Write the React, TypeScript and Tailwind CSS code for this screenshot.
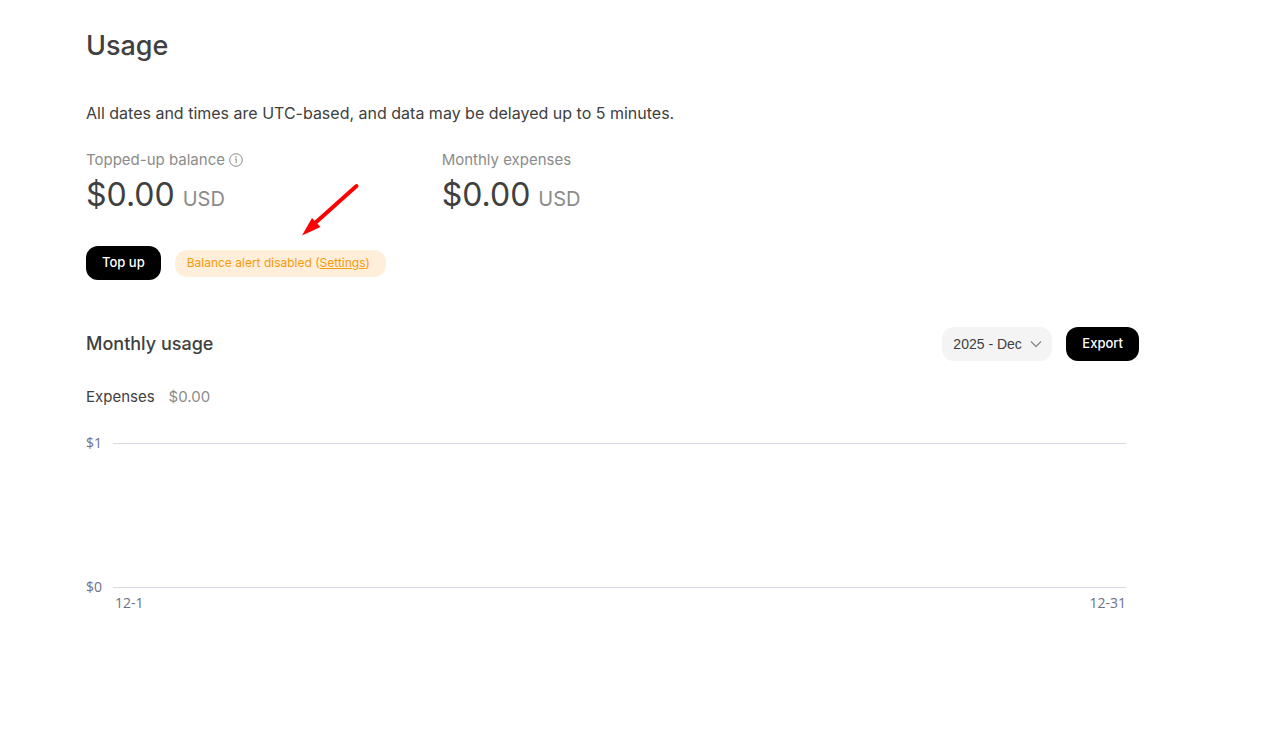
import { useState } from 'react';

const MONTHS = ['2025 - Dec', '2025 - Nov', '2025 - Oct'];

interface MetricProps {
  label: string;
  amount: string;
  info?: boolean;
}

function InfoIcon() {
  return (
    <svg width="14" height="14" viewBox="0 0 14 14" fill="none" aria-hidden="true">
      <circle cx="7" cy="7" r="6.3" stroke="currentColor" strokeWidth="1" />
      <path d="M6 6h1.2v4" stroke="currentColor" strokeWidth="1" />
      <circle cx="7" cy="4" r="0.8" fill="currentColor" />
    </svg>
  );
}

function Metric({ label, amount, info }: MetricProps) {
  return (
    <div>
      <div className="flex items-center gap-1 text-[15px] leading-6 text-[#8b8b8b]">
        <span>{label}</span>
        {info && <InfoIcon />}
      </div>
      <div className="mt-[3px] flex h-10 items-baseline gap-2 leading-10">
        <span className="text-[32px]">{amount}</span>
        <span className="text-xl leading-6 text-[#8b8b8b]">USD</span>
      </div>
    </div>
  );
}

function GridLine({ label }: { label: string }) {
  return (
    <div className="flex items-center">
      <span className="w-[27px]">{label}</span>
      <div className="h-px flex-1 bg-[#d5d9e2]" />
    </div>
  );
}

// Red pointer drawing attention to the balance alert
function Pointer() {
  return (
    <svg
      className="absolute -top-[71px] left-[126px]"
      width="60"
      height="60"
      viewBox="0 0 60 60"
      fill="none"
      aria-hidden="true"
    >
      <path d="M55.5 7 13 45" stroke="#ff0000" strokeWidth="4" strokeLinecap="round" />
      <path d="M1 56.5 11 39 19.5 48Z" fill="#ff0000" />
    </svg>
  );
}

export default function App() {
  const [month, setMonth] = useState(MONTHS[0]);

  return (
    <main className="min-h-screen bg-white pt-[26px] pr-[134px] pb-16 pl-[86px] font-['Inter',sans-serif] text-[#404040]">
      <h1 className="text-[27px] leading-10 font-medium">Usage</h1>
      <p className="mt-[35px] text-base leading-6">
        All dates and times are UTC-based, and data may be delayed up to 5 minutes.
      </p>

      <section className="mt-[23px] grid grid-cols-3 gap-3.5">
        <Metric label="Topped-up balance" amount="$0.00" info />
        <Metric label="Monthly expenses" amount="$0.00" />
      </section>

      <div className="mt-[31px] flex items-center gap-3.5">
        <button className="h-[34px] rounded-xl bg-black px-4 text-[13px] font-medium text-white">
          Top up
        </button>
        <div className="relative rounded-xl bg-[#ffeeda] pt-[3px] pr-4 pb-[5px] pl-3 text-xs leading-[19px] text-[#f59a0b]">
          Balance alert disabled (
          <a href="#settings" className="underline">Settings</a>)
          <Pointer />
        </div>
      </div>

      <section className="mt-[47px]">
        <div className="flex items-center justify-between">
          <h2 className="text-lg leading-6 font-medium">Monthly usage</h2>
          <div className="flex items-center gap-3.5">
            <div className="relative">
              <select
                aria-label="Month"
                value={month}
                onChange={(e) => setMonth(e.target.value)}
                className="h-[34px] w-[110px] appearance-none rounded-xl bg-[#f4f4f4] pr-7 pl-[11px] font-['Liberation_Sans',sans-serif] text-sm"
              >
                {MONTHS.map((m) => (
                  <option key={m}>{m}</option>
                ))}
              </select>
              <svg
                className="pointer-events-none absolute top-3 right-2.5 text-[#8b8b8b]"
                width="12"
                height="10"
                viewBox="0 0 12 10"
                fill="none"
                aria-hidden="true"
              >
                <path d="m1 2.5 5 5 5-5" stroke="currentColor" strokeWidth="1.3" />
              </svg>
            </div>
            <button className="h-[34px] rounded-xl bg-black px-4 text-[13px] font-medium text-white">
              Export
            </button>
          </div>
        </div>

        <div className="mt-6 flex gap-3.5 text-[15px] leading-6">
          <span>Expenses</span>
          <span className="text-[#8b8b8b]">$0.00</span>
        </div>

        <div className="mt-[26px] pr-[13px] font-['Open_Sans',sans-serif] text-sm leading-4 text-[#6e7087]">
          <div className="flex flex-col gap-32">
            <GridLine label="$1" />
            <GridLine label="$0" />
          </div>
          <div className="flex justify-between pl-[29px]">
            <span>12-1</span>
            <span>12-31</span>
          </div>
        </div>
      </section>
    </main>
  );
}
